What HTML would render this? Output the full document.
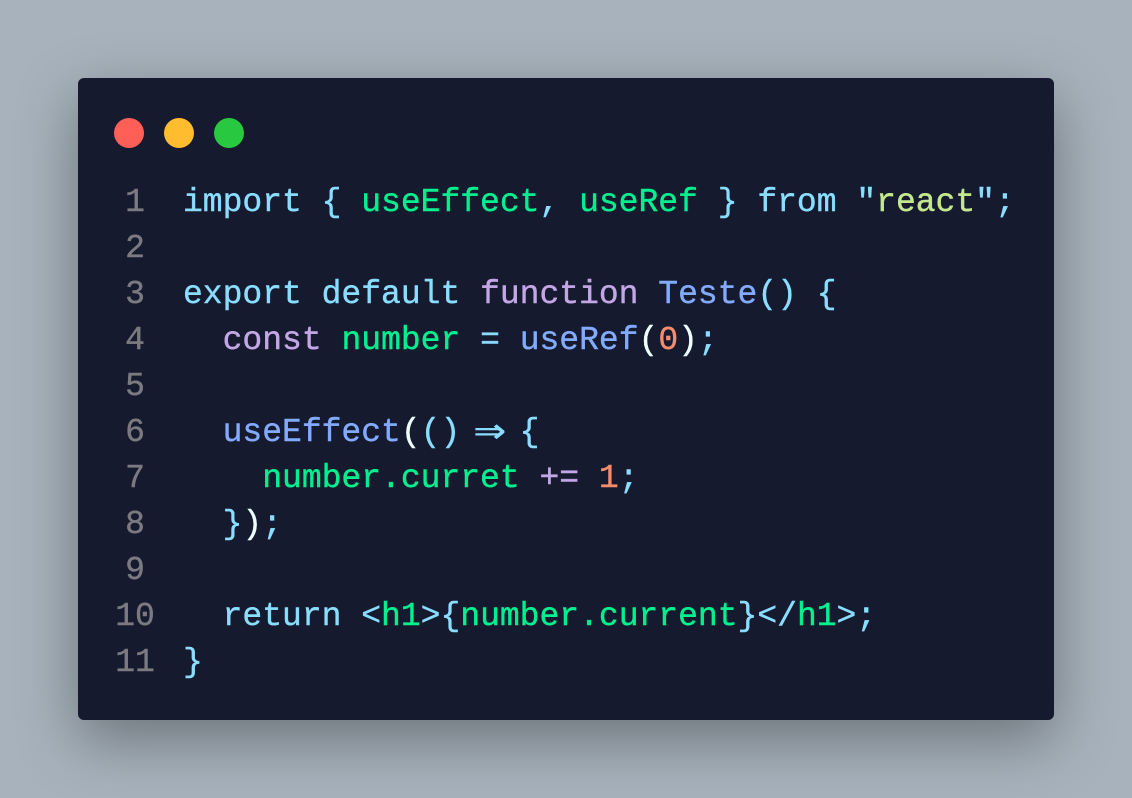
<!DOCTYPE html>
<html><head><meta charset="utf-8"><style>
html,body{margin:0;padding:0}
body{width:1132px;height:798px;background:#a7b2bc;position:relative;overflow:hidden;font-family:"Liberation Mono",monospace}
.card{position:absolute;left:78px;top:78px;width:976px;height:642px;background:#151a2e;border-radius:6px;box-shadow:0 20px 60px rgba(0,0,0,0.35)}
.dot{position:absolute;top:118px;width:30px;height:30px;border-radius:50%}
.code{position:absolute;left:0;top:180px;font-size:33px;line-height:46px;white-space:pre;-webkit-text-stroke:0.4px currentColor}
.ln{position:absolute;top:0;left:105px;width:60px;text-align:center;color:#7a7a80}
.tx{position:absolute;top:0;left:183px}
.c{color:#89ddff}.g{color:#00f08f}.p{color:#c3a6e6}.b{color:#82aaff}.o{color:#f78c6c}.s{color:#c3e88d}.w{color:#eeffff}
.ar{display:inline-block;width:19.8px;transform:scale(1.6,1.3);text-align:center}
</style></head><body>
<div class="card"></div>
<div class="dot" style="left:114px;background:#ff5f57"></div>
<div class="dot" style="left:164px;background:#febc2e"></div>
<div class="dot" style="left:214px;background:#28c840"></div>
<div class="code"><div class="ln">1<br>2<br>3<br>4<br>5<br>6<br>7<br>8<br>9<br>10<br>11</div><div class="tx"><span class="c">import { </span><span class="g">useEffect</span><span class="c">, </span><span class="g">useRef</span><span class="c"> } from "</span><span class="s">react</span><span class="c">";</span>

<span class="c">export default </span><span class="p">function </span><span class="b">Teste</span><span class="c">() {</span>
  <span class="p">const </span><span class="g">number</span><span class="c"> = </span><span class="b">useRef</span><span class="w">(</span><span class="o">0</span><span class="w">)</span><span class="c">;</span>

  <span class="b">useEffect</span><span class="w">(</span><span class="c">() <span class="ar">⇒</span> {</span>
    <span class="g">number.curret</span> <span class="p">+=</span> <span class="o">1</span><span class="c">;</span>
  <span class="c">}</span><span class="w">)</span><span class="c">;</span>

  <span class="c">return &lt;</span><span class="g">h1</span><span class="c">&gt;{</span><span class="g">number.current</span><span class="c">}&lt;/</span><span class="g">h1</span><span class="c">&gt;;</span>
<span class="c">}</span></div></div>
</body></html>
